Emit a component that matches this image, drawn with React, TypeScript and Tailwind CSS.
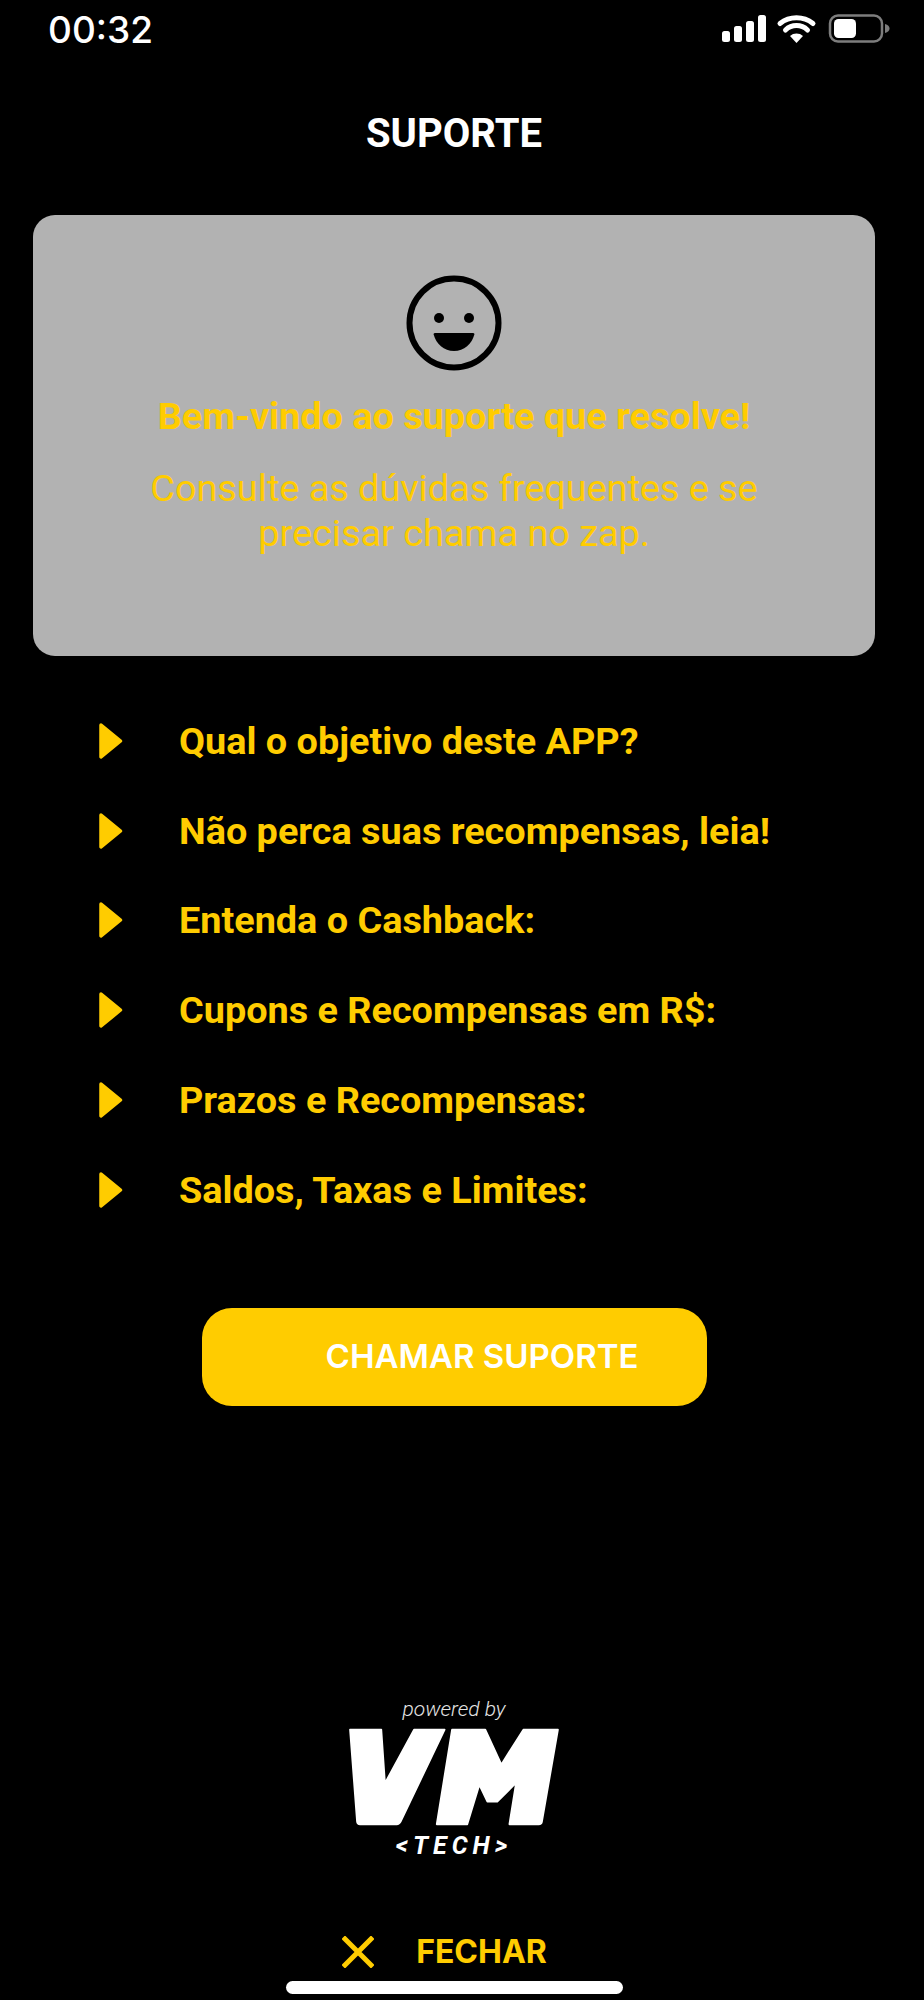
import React from "react";

const items = [
  "Qual o objetivo deste APP?",
  "Não perca suas recompensas, leia!",
  "Entenda o Cashback:",
  "Cupons e Recompensas em R$:",
  "Prazos e Recompensas:",
  "Saldos, Taxas e Limites:",
];

const StatusIcons = () => (
  <svg width="170" height="30" viewBox="0 0 170 30" className="block">
    {/* signal */}
    <rect x="2" y="17" width="8" height="11" rx="2.5" fill="#fff" />
    <rect x="14" y="12" width="8" height="16" rx="2.5" fill="#fff" />
    <rect x="26" y="7" width="8" height="21" rx="2.5" fill="#fff" />
    <rect x="38" y="1" width="8" height="27" rx="2.5" fill="#fff" />
    {/* wifi */}
    <path d="M60 9.500a27 27 0 0 1 33 0" fill="none" stroke="#fff" strokeWidth="5" strokeLinecap="round" />
    <path d="M65.500 16a16 16 0 0 1 22 0" fill="none" stroke="#fff" strokeWidth="5" strokeLinecap="round" />
    <path d="M70 22l6.500 7 6.500-7a10 10 0 0 0-13 0z" fill="#fff" />
    {/* battery */}
    <rect x="110" y="1.500" width="52" height="26" rx="8" fill="none" stroke="#7d7d7d" strokeWidth="2.500" />
    <rect x="114" y="5" width="22" height="19" rx="4.500" fill="#fff" />
    <path d="M165 10c3 .8 4.500 2.500 4.500 4.500s-1.500 3.700-4.500 4.500z" fill="#7d7d7d" />
  </svg>
);

const Smiley = () => (
  <svg width="96" height="96" viewBox="0 0 96 96" className="block">
    <circle cx="48" cy="48" r="44.500" fill="none" stroke="#000" strokeWidth="6" />
    <circle cx="33" cy="43" r="5" fill="#000" />
    <circle cx="63" cy="43" r="5" fill="#000" />
    <path d="M29 58h38a2 2 0 0 1 1.500 1C66 69 58 76 48 76S30 69 27.500 59a2 2 0 0 1 1.500-1z" fill="#000" />
  </svg>
);

const Arrow = () => (
  <svg width="24" height="36" viewBox="0 0 24 36" className="block shrink-0">
    <path d="M2 2 L21.500 18 L2 34 Z" fill="#ffcc00" stroke="#ffcc00" strokeWidth="3.500" strokeLinejoin="round" />
  </svg>
);

const VmLogo = () => (
  <svg width="212" height="100" viewBox="86 146 636 296" className="block">
    <path
      d="M92 152H186L197 312L284 152H376L244 428Q240 436 232 436H122Q114 436 113 428Z"
      fill="#fff"
      stroke="#fff"
      strokeWidth="5"
      strokeLinejoin="round"
    />
    <path
      d="M398 152H498L546 256L612 152H716L668 428Q667 436 658 436H570L590 312L534 368H504L480 318L444 436H352Z"
      fill="#fff"
      stroke="#fff"
      strokeWidth="5"
      strokeLinejoin="round"
    />
  </svg>
);

export default function App() {
  return (
    <div className="relative h-[2000px] w-[924px] overflow-hidden bg-black font-['Roboto',sans-serif]">
      <div className="relative h-full w-[908px]">
        {/* status bar */}
        <div className="flex h-[60px] items-start justify-between pl-[48px] pr-[18px] pt-[14px]">
          <span className="font-['Inter',sans-serif] text-[37px] font-medium leading-[32px] text-white">00:32</span>
          <StatusIcons />
        </div>

        <h1 className="mt-[52px] text-center text-[40px] font-bold leading-[44px] text-white">SUPORTE</h1>

        {/* welcome card */}
        <div className="mx-[33px] mt-[59px] flex h-[441px] flex-col items-center rounded-[22px] bg-[#b2b2b2] pt-[60px] text-[#ffcc00]">
          <Smiley />
          <p className="mt-[23px] text-[37.800px] font-bold leading-[44px]">Bem-vindo ao suporte que resolve!</p>
          <p className="mt-[28px] w-[640px] text-center text-[37.800px] font-normal leading-[45px]">
            Consulte as dúvidas frequentes e se precisar chama no zap.
          </p>
        </div>

        {/* FAQ list */}
        <ul className="mt-[40px] flex flex-col pl-[99px]">
          {items.map((item) => (
            <li key={item} className="flex h-[89.800px] items-center gap-[56px] text-[#ffcc00]">
              <Arrow />
              <span className="text-[37.800px] font-bold leading-[44px]">{item}</span>
            </li>
          ))}
        </ul>

        <div className="mt-[73px] flex justify-center">
          <button className="flex h-[98px] w-[505px] items-center justify-end rounded-[30px] bg-[#ffcc00] pr-[68px] font-['Inter',sans-serif] text-[33px] font-semibold text-white">
            CHAMAR SUPORTE
          </button>
        </div>

        {/* powered by */}
        <div className="mt-[291px] flex flex-col items-center">
          <p className="text-[21px] font-light italic leading-[24px] text-[#e4e4e4]">powered by</p>
          <div className="mt-[6px]">
            <VmLogo />
          </div>
          <p className="mt-[6px] text-[25px] font-bold italic leading-[26px] tracking-[5px] text-white">{"<TECH>"}</p>
        </div>

        {/* close */}
        <div className="mt-[75px] flex items-center justify-center gap-[42px] pr-[19px] text-[#ffcc00]">
          <svg width="32" height="32" viewBox="0 0 32 32" className="block">
            <path d="M3 3L29 29M29 3L3 29" stroke="#ffcc00" strokeWidth="5" strokeLinecap="square" />
          </svg>
          <span className="font-['Inter',sans-serif] text-[32px] font-bold leading-[36px]">FECHAR</span>
        </div>

        {/* home indicator */}
        <div className="absolute bottom-[6px] left-[286px] h-[13px] w-[337px] rounded-full bg-white" />
      </div>
    </div>
  );
}
